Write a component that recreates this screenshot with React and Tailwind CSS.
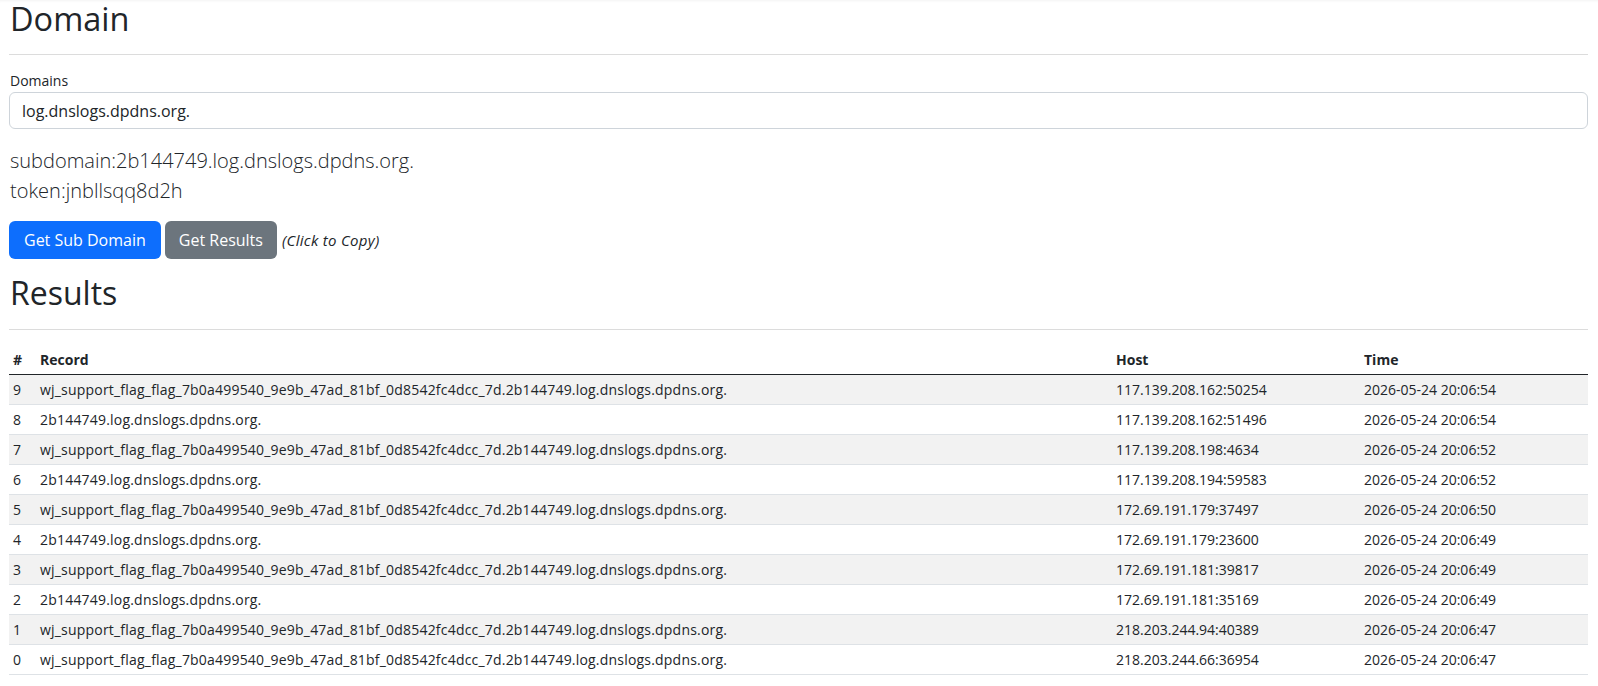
import React from "react";

const rows = [
  ["9", "wj_support_flag_flag_7b0a499540_9e9b_47ad_81bf_0d8542fc4dcc_7d.2b144749.log.dnslogs.dpdns.org.", "117.139.208.162:50254", "2026-05-24 20:06:54"],
  ["8", "2b144749.log.dnslogs.dpdns.org.", "117.139.208.162:51496", "2026-05-24 20:06:54"],
  ["7", "wj_support_flag_flag_7b0a499540_9e9b_47ad_81bf_0d8542fc4dcc_7d.2b144749.log.dnslogs.dpdns.org.", "117.139.208.198:4634", "2026-05-24 20:06:52"],
  ["6", "2b144749.log.dnslogs.dpdns.org.", "117.139.208.194:59583", "2026-05-24 20:06:52"],
  ["5", "wj_support_flag_flag_7b0a499540_9e9b_47ad_81bf_0d8542fc4dcc_7d.2b144749.log.dnslogs.dpdns.org.", "172.69.191.179:37497", "2026-05-24 20:06:50"],
  ["4", "2b144749.log.dnslogs.dpdns.org.", "172.69.191.179:23600", "2026-05-24 20:06:49"],
  ["3", "wj_support_flag_flag_7b0a499540_9e9b_47ad_81bf_0d8542fc4dcc_7d.2b144749.log.dnslogs.dpdns.org.", "172.69.191.181:39817", "2026-05-24 20:06:49"],
  ["2", "2b144749.log.dnslogs.dpdns.org.", "172.69.191.181:35169", "2026-05-24 20:06:49"],
  ["1", "wj_support_flag_flag_7b0a499540_9e9b_47ad_81bf_0d8542fc4dcc_7d.2b144749.log.dnslogs.dpdns.org.", "218.203.244.94:40389", "2026-05-24 20:06:47"],
  ["0", "wj_support_flag_flag_7b0a499540_9e9b_47ad_81bf_0d8542fc4dcc_7d.2b144749.log.dnslogs.dpdns.org.", "218.203.244.66:36954", "2026-05-24 20:06:47"],
];

export default function App() {
  return (
    <div className="min-h-[686px] bg-white text-[#212529] font-['Open_Sans',sans-serif] shadow-[inset_0_3px_3px_-2px_rgba(0,0,0,0.05)]">
      <div className="pl-[9px] pr-[10px]">
        <h1 className="text-[32.5px] leading-[38px] font-normal ml-[1px]">Domain</h1>
        <hr className="mt-[16px] mb-[15px] border-t border-[#dcdcdc]" />
        <label className="block text-[14px] leading-[21px] mb-[1px] ml-[1px]">Domains</label>
        <div className="h-[37px] border border-[#ced4da] rounded-[6px] px-[12px] flex items-center text-[16px]">
          log.dnslogs.dpdns.org.
        </div>
        <div className="mt-[17px] text-[20px] font-light leading-[30px] ml-[1px]">
          <div>subdomain:2b144749.log.dnslogs.dpdns.org.</div>
          <div>token:jnbllsqq8d2h</div>
        </div>
        <div className="mt-[15px] flex items-center">
          <button className="h-[38px] px-[15px] rounded-[6px] bg-[#0d6efd] text-white text-[16px]">Get Sub Domain</button>
          <button className="ml-[4px] h-[38px] px-[14px] rounded-[6px] bg-[#6c757d] text-white text-[16px]">Get Results</button>
          <span className="ml-[5px] text-[15px] italic tracking-[0.3px]">(Click to Copy)</span>
        </div>
        <h2 className="mt-[15px] text-[32px] leading-[38px] font-normal ml-[1px]">Results</h2>
        <hr className="mt-[17px] mb-[15px] border-t border-[#dcdcdc]" />
        <table className="w-full text-[14px] leading-[21px] border-collapse table-fixed">
          <colgroup>
            <col className="w-[27px]" />
            <col className="w-[1076px]" />
            <col className="w-[248px]" />
            <col />
          </colgroup>
          <thead>
            <tr className="border-b border-[#212529]">
              <th className="text-left font-bold px-[4px] py-[4px]">#</th>
              <th className="text-left font-bold px-[4px] py-[4px]">Record</th>
              <th className="text-left font-bold px-[4px] py-[4px]">Host</th>
              <th className="text-left font-bold px-[4px] py-[4px]">Time</th>
            </tr>
          </thead>
          <tbody>
            {rows.map((r, i) => (
              <tr key={r[0]} className={`border-b border-[#dee2e6] ${i % 2 === 0 ? "bg-[#f2f2f2]" : "bg-white"}`}>
                <td className="px-[4px] py-[4px]">{r[0]}</td>
                <td className="px-[4px] py-[4px] whitespace-nowrap tracking-[0.2px]">{r[1]}</td>
                <td className="px-[4px] py-[4px]">{r[2]}</td>
                <td className="px-[4px] py-[4px]">{r[3]}</td>
              </tr>
            ))}
          </tbody>
        </table>
      </div>
    </div>
  );
}
